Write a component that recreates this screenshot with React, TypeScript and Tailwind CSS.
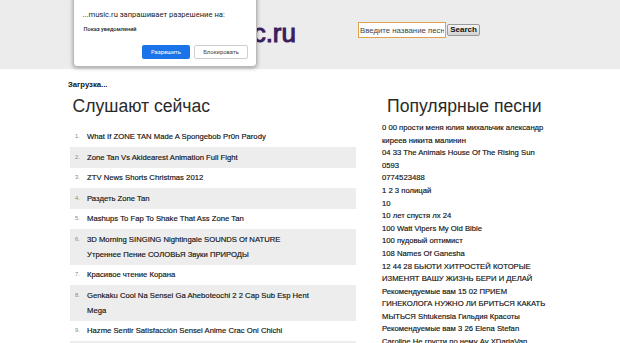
import React from "react";

const leftItems: string[][] = [
  ["What If ZONE TAN Made A Spongebob Pr0n Parody"],
  ["Zone Tan Vs Akidearest Animation Full Fight"],
  ["ZTV News Shorts Christmas 2012"],
  ["Раздеть Zone Tan"],
  ["Mashups To Fap To Shake That Ass Zone Tan"],
  ["3D Morning SINGING Nightingale SOUNDS Of NATURE", "Утреннее Пение СОЛОВЬЯ Звуки ПРИРОДЫ"],
  ["Красивое чтение Корана"],
  ["Genkaku Cool Na Sensei Ga Aheboteochi 2 2 Cap Sub Esp Hent", "Mega"],
  ["Hazme Sentir Satisfacción Sensei Anime Crac Oni Chichi"],
  ["Zone Tan Animation Compilation"],
];

const rightItems: string[][] = [
  ["0 00 прости меня юлия михальчик александр", "киреев никита малинин"],
  ["04 33 The Animals House Of The Rising Sun"],
  ["0593"],
  ["0774523488"],
  ["1 2 3 полицай"],
  ["10"],
  ["10 лет спустя лх 24"],
  ["100 Watt Vipers My Old Bible"],
  ["100 пудовый оптимист"],
  ["108 Names Of Ganesha"],
  ["12 44 28 БЬЮТИ ХИТРОСТЕЙ КОТОРЫЕ", "ИЗМЕНЯТ ВАШУ ЖИЗНЬ БЕРИ И ДЕЛАЙ"],
  ["Рекомендуемые вам 15 02 ПРИЕМ", "ГИНЕКОЛОГА НУЖНО ЛИ БРИТЬСЯ КАКАТЬ", "МЫТЬСЯ Shtukensia Гильдия Красоты"],
  ["Рекомендуемые вам 3 26 Elena Stefan", "Caroline Не грусти по нему Ау XDariaVan"],
];

export default function App() {
  return (
    <div
      className="relative w-[620px] h-[343px] overflow-hidden bg-white text-[#222]"
      style={{ fontFamily: '"Liberation Sans", Arial, sans-serif' }}
    >
      {/* Header */}
      <div className="h-[69px] bg-[#ececec] flex items-start">
        <div className="w-[296px] text-right pt-[20.4px] text-[26px] leading-[26px] text-[#3b1d5e] [-webkit-text-stroke:1px_#3b1d5e]">
          mp3music.ru
        </div>
        <div className="ml-[62px] mt-[22px] flex items-start">
          <input
            className="w-[88px] h-[16px] border border-[#e0a24c] bg-white px-[1px] text-[7.8px] text-[#333] placeholder:text-[#444] outline-none"
            placeholder="Введите название песни"
            style={{ fontFamily: '"Liberation Sans", Arial, sans-serif' }}
          />
          <button className="ml-[1px] mt-[2px] w-[33px] h-[12px] border border-[#9a9a9a] rounded-[2px] bg-gradient-to-b from-[#f4f4f4] to-[#d2d2d2] text-[8px] leading-[10px] font-bold text-[#111]">
            Search
          </button>
        </div>
      </div>

      {/* Loading */}
      <div className="mt-[11px] pl-[68px] text-[7.7px] leading-[10px] font-bold text-[#111]">Загрузка...</div>

      {/* Columns */}
      <div className="flex">
        <div className="ml-[70px] w-[286px]">
          <h2 className="mt-[4.2px] pl-[2.5px] text-[17.6px] leading-[24px] text-[#2a2a2a]">Слушают сейчас</h2>
          <ol className="mt-[8.55px]">
            {leftItems.map((lines, i) => (
              <li
                key={i}
                className={`flex py-[2.75px] pl-[5px] ${i % 2 === 1 ? "bg-[#ededed]" : ""}`}
              >
                <span className="w-[12px] shrink-0 text-[5.8px] leading-[15px] text-[#888]">{i + 1}.</span>
                <span className="text-[7.7px] leading-[15px] text-[#111] whitespace-nowrap [-webkit-text-stroke:0.15px_#111]">
                  {lines.map((l, j) => (
                    <span key={j} className="block">
                      {l}
                    </span>
                  ))}
                </span>
              </li>
            ))}
          </ol>
        </div>
        <div className="ml-[26px] w-[220px]">
          <h2 className="mt-[4.2px] pl-[5px] text-[17.6px] leading-[24px] text-[#2a2a2a]">Популярные песни</h2>
          <ul className="mt-[3.8px]">
            {rightItems.map((lines, i) => (
              <li
                key={i}
                className="text-[7.7px] leading-[12.6px] text-[#111] whitespace-nowrap [-webkit-text-stroke:0.15px_#111]"
              >
                {lines.map((l, j) => (
                  <span key={j} className="block">
                    {l}
                  </span>
                ))}
              </li>
            ))}
          </ul>
        </div>
      </div>

      {/* Permission popup */}
      <div
        className="absolute left-[73px] top-[-5px] w-[184px] h-[72px] bg-white rounded-[4px] border border-[#b9b9b9] shadow-[0_1px_4px_rgba(0,0,0,0.35)]"
        style={{ fontFamily: 'Roboto, "Liberation Sans", Arial, sans-serif' }}
      >
        <div className="pl-[8.5px] pt-[14px] text-[7.6px] leading-[10px] text-[#222]">
          ...music.ru запрашивает разрешение на:
        </div>
        <div className="pl-[9.5px] mt-[4.5px] text-[5.6px] leading-[8px] font-medium text-[#222]">
          Показ уведомлений
        </div>
        <div className="mt-[12px] pr-[8px] flex justify-end gap-[4px]">
          <button className="w-[48px] h-[14px] rounded-[2px] bg-[#1a73e8] text-white text-[5.8px] leading-[14px]">
            Разрешить
          </button>
          <button className="w-[54px] h-[14px] rounded-[2px] border border-[#cfcfcf] bg-white text-[#444] text-[5.8px] leading-[12px]">
            Блокировать
          </button>
        </div>
      </div>
    </div>
  );
}
